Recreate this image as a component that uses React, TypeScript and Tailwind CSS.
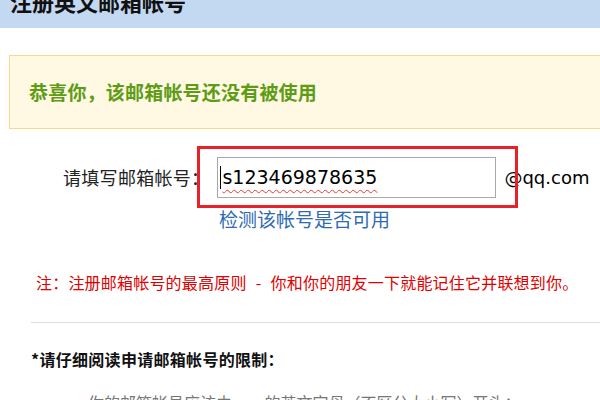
import React from "react";

export default function App() {
  return (
    <div className="relative w-[600px] h-[400px] overflow-hidden bg-white font-['Noto_Sans_CJK_SC',sans-serif] text-[#222]">
      {/* header */}
      <div className="h-[28px] bg-[#c3d9f1] overflow-hidden">
        <div className="mt-[-10px] ml-[10px] text-[22px] leading-none font-bold text-[#111] whitespace-nowrap">
          注册英文邮箱帐号
        </div>
      </div>

      {/* success notice */}
      <div className="mt-[27px] ml-[9px] w-[600px] h-[74px] border border-[#f5d98c] bg-[#fff8e3] flex items-center pl-[19px]">
        <span className="text-[19px] font-bold text-[#5d9c14] whitespace-nowrap tracking-[0.2px]">
          恭喜你，该邮箱帐号还没有被使用
        </span>
      </div>

      {/* input row */}
      <div className="mt-[28px] flex items-center pl-[63px]">
        <span className="text-[18px] text-[#222] whitespace-nowrap tracking-[0.3px]">请填写邮箱帐号：</span>
        <div className="ml-[8px] w-[279px] h-[41px] border border-[#a9a9a9] flex items-center pl-[2px] shrink-0">
          <span className="w-px h-[23px] bg-black mr-px" />
          <span className="font-['DejaVu_Sans',sans-serif] text-[19px] text-black underline decoration-wavy decoration-[#e53935] decoration-1 underline-offset-[5px]">
            s123469878635
          </span>
        </div>
        <span className="ml-[8px] font-['DejaVu_Sans',sans-serif] text-[18px] text-black whitespace-nowrap">
          @qq.com
        </span>
      </div>

      <div className="mt-[9px] ml-[219px] text-[19px] leading-[24px] text-[#2f6bb3] whitespace-nowrap">
        检测该帐号是否可用
      </div>

      {/* note */}
      <div className="mt-[39px] pl-[36px] text-[16px] leading-[24px] text-[#e00000] whitespace-nowrap tracking-[0.2px]">
        注：注册邮箱帐号的最高原则
        <span className="inline-block w-[24px] text-center">-</span>
        你和你的朋友一下就能记住它并联想到你。
      </div>

      <div className="mt-[28px] ml-[31px] border-t border-[#dcdcdc]" />

      <div className="mt-[24px] pl-[31px] text-[16px] leading-[24px] font-bold text-[#111] whitespace-nowrap tracking-[0.3px]">
        *请仔细阅读申请邮箱帐号的限制：
      </div>

      <div className="mt-[19px] pl-[88px] text-[16px] leading-[24px] text-[#777] whitespace-nowrap">
        你的邮箱帐号应该由a～z的英文字母（不区分大小写）开头；
      </div>

      {/* red annotation frame */}
      <div className="absolute left-[197px] top-[146px] w-[321px] h-[62px] border-[3px] border-[#e8202a] pointer-events-none" />
    </div>
  );
}
